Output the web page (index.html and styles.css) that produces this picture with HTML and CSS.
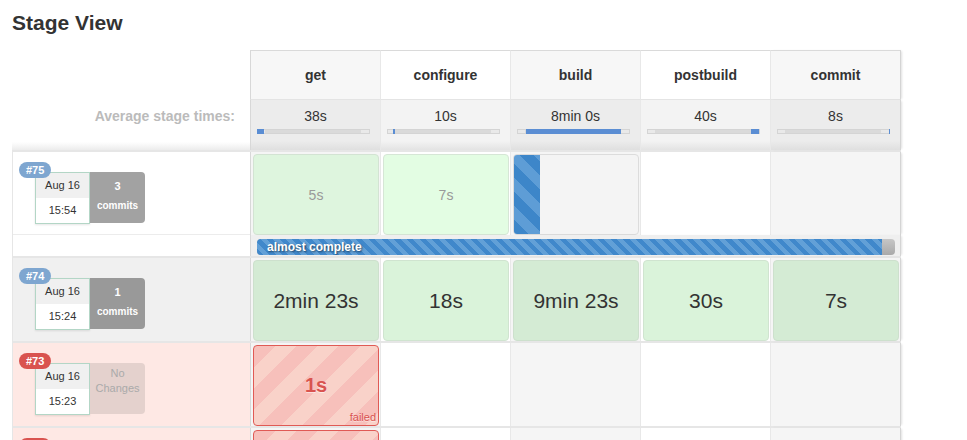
FILE: index.html
```html
<!DOCTYPE html>
<html>
<head>
<meta charset="utf-8">
<title>Stage View</title>
<link rel="stylesheet" href="styles.css">
</head>
<body>
<h1 class="title">Stage View</h1>
<div class="sv">
  <div class="sv-row names">
    <div class="left"></div>
    <div class="col odd first name">get</div>
    <div class="col even name">configure</div>
    <div class="col odd name">build</div>
    <div class="col even name">postbuild</div>
    <div class="col odd last name">commit</div>
  </div>
  <div class="sv-row avgs">
    <div class="left avg-label">Average stage times:</div>
    <div class="col odd first avg"><span>38s</span><div class="track"><div class="fill" style="margin-left:0;width:7px"></div></div></div>
    <div class="col even avg"><span>10s</span><div class="track"><div class="fill" style="margin-left:6px;width:2px"></div></div></div>
    <div class="col odd avg"><span>8min 0s</span><div class="track"><div class="fill" style="margin-left:9px;width:95px"></div></div></div>
    <div class="col even avg"><span>40s</span><div class="track"><div class="fill" style="margin-left:104px;width:8px"></div></div></div>
    <div class="col odd last avg"><span>8s</span><div class="track"><div class="fill" style="margin-left:112px;width:1px"></div></div></div>
  </div>

  <div class="sv-row body running">
    <div class="left build-cell white">
      <div class="build">
        <span class="badge blue">#75</span>
        <div class="date"><div class="d">Aug 16</div><div class="t">15:54</div></div>
        <div class="changes"><b class="num">3</b><b>commits</b></div>
      </div>
    </div>
    <div class="col odd first cellwrap"><div class="stage done a">5s</div></div>
    <div class="col even cellwrap"><div class="stage done b">7s</div></div>
    <div class="col odd cellwrap"><div class="stage inprogress"><div class="stripes"></div></div></div>
    <div class="col even cellwrap"></div>
    <div class="col odd last cellwrap"></div>
    <div class="prog">
      <div class="pbar"><div class="pfill" style="width:98%"><span>almost complete</span></div></div>
    </div>
  </div>

  <div class="sv-row body">
    <div class="left build-cell grey">
      <div class="build">
        <span class="badge blue">#74</span>
        <div class="date"><div class="d">Aug 16</div><div class="t">15:24</div></div>
        <div class="changes dark"><b class="num">1</b><b>commits</b></div>
      </div>
    </div>
    <div class="col odd first cellwrap"><div class="stage ok a">2min 23s</div></div>
    <div class="col even cellwrap"><div class="stage ok b">18s</div></div>
    <div class="col odd cellwrap"><div class="stage ok a">9min 23s</div></div>
    <div class="col even cellwrap"><div class="stage ok b">30s</div></div>
    <div class="col odd last cellwrap"><div class="stage ok a">7s</div></div>
  </div>

  <div class="sv-row body">
    <div class="left build-cell pink">
      <div class="build">
        <span class="badge red">#73</span>
        <div class="date"><div class="d">Aug 16</div><div class="t">15:23</div></div>
        <div class="changes none">No<br>Changes</div>
      </div>
    </div>
    <div class="col odd first cellwrap"><div class="stage failed">1s<span class="flabel">failed</span></div></div>
    <div class="col even cellwrap"></div>
    <div class="col odd cellwrap"></div>
    <div class="col even cellwrap"></div>
    <div class="col odd last cellwrap"></div>
  </div>

  <div class="sv-row body">
    <div class="left build-cell pink">
      <div class="build">
        <span class="badge red">#72</span>
        <div class="date"><div class="d">Aug 16</div><div class="t">15:20</div></div>
        <div class="changes none">No<br>Changes</div>
      </div>
    </div>
    <div class="col odd first cellwrap"><div class="stage failed">1s<span class="flabel">failed</span></div></div>
    <div class="col even cellwrap"></div>
    <div class="col odd cellwrap"></div>
    <div class="col even cellwrap"></div>
    <div class="col odd last cellwrap"></div>
  </div>
</div>
</body>
</html>
```

FILE: styles.css
```css
html, body {
  margin: 0;
  padding: 0;
  background: #fff;
}
body {
  font-family: "Liberation Sans", Arial, sans-serif;
  color: #333;
}
.title {
  margin: 11px 0 15px 12px;
  font-size: 21px;
  line-height: 24px;
  font-weight: bold;
  color: #333;
}
.sv {
  margin-left: 12px;
  width: 889px;
}
.sv-row {
  display: grid;
  grid-template-columns: 238px repeat(4, 130px) 131px;
}
.col {
  border-left: 1px solid #e8e8e8;
}
.col.first {
  border-left-color: #d8d8d8;
}
.col.last {
  border-right: 1px solid #d4d4d4;
  box-shadow: 2px 0 2px -1px rgba(0, 0, 0, 0.12);
}

/* header names */
.name {
  height: 48px;
  display: flex;
  align-items: center;
  justify-content: center;
  font-size: 14px;
  font-weight: bold;
  color: #333;
  border-top: 1px solid #dadada;
  border-bottom: 1px solid #e4e4e4;
}
.name.odd { background: #f7f7f7; }
.name.even { background: #fff; }

/* averages */
.avg {
  height: 50px;
  box-sizing: border-box;
  padding-top: 8px;
  text-align: center;
  font-size: 14px;
  line-height: 17px;
  color: #333;
}
.avg.odd { background: linear-gradient(#ececec 82%, #dfdfdf); }
.avg.even { background: linear-gradient(#f3f3f3 82%, #e3e3e3); }
.avg-label {
  box-sizing: border-box;
  padding: 8px 15px 0 0;
  text-align: right;
  font-size: 14px;
  line-height: 17px;
  font-weight: bold;
  color: #bbb;
  background: linear-gradient(#fff 84%, #ececec);
}
.track {
  display: flex;
  margin: 4px 10px 0 6px;
  height: 5px;
  background: linear-gradient(to right, #e9e9e9 8px, #dadada 8px, #dadada calc(100% - 9px), #e9e9e9 calc(100% - 9px));
  box-shadow: inset 0 0 0 1px #d4d4d4;
}
.fill {
  height: 100%;
  background: #5a8dd3;
}

/* body rows */
.body {
  border-top: 2px solid #e6e6e6;
  grid-template-rows: 83px;
}
.body.running {
  grid-template-rows: 83px 21px;
}
.build-cell {
  border-left: 1px solid #e6e6e6;
}
.running .build-cell {
  grid-row: 1 / 3;
  background: linear-gradient(#fff 82px, #ececec 82px, #ececec 83px, #fff 83px);
}
.build-cell.grey { background: #f0f0f0; }
.build-cell.pink { background: #fee8e4; }
.cellwrap {
  padding: 2px 1px 0 2px;
}
.cellwrap.odd { background: #f5f5f5; }
.cellwrap.even { background: #fff; }

.build {
  position: relative;
  display: flex;
  width: max-content;
  margin: 20px 0 0 22px;
}
.badge {
  position: absolute;
  left: -16px;
  top: -10px;
  height: 16px;
  line-height: 16px;
  padding: 0 7px;
  border-radius: 8px;
  font-size: 11px;
  font-weight: bold;
  color: #fff;
}
.badge.blue { background: #7ea6d0; }
.badge.red { background: #d9534f; }
.date {
  width: 55px;
  height: 52px;
  box-sizing: border-box;
  border: 1px solid #b3d6c6;
  font-size: 11px;
  text-align: center;
  color: #333;
  box-shadow: 0 1px 2px rgba(0, 0, 0, 0.1);
}
.date .d {
  height: 25px;
  line-height: 25px;
  background: #f0f0f0;
}
.date .t {
  height: 25px;
  line-height: 25px;
  background: #fff;
}
.changes {
  width: 55px;
  height: 51px;
  box-sizing: border-box;
  padding-top: 5px;
  border-radius: 0 4px 4px 0;
  background: #a2a2a2;
  color: #fff;
  font-size: 10px;
  line-height: 19px;
  text-align: center;
  display: flex;
  flex-direction: column;
}
.changes .num { font-size: 11px; }
.changes.dark { background: #999; }
.changes.none {
  display: block;
  padding-top: 3px;
  background: #e4d1cd;
  color: #aaa;
  font-size: 11px;
  line-height: 15px;
}

.stage {
  height: 81px;
  box-sizing: border-box;
  border-radius: 4px;
  border: 1px solid #d2e2d2;
  display: flex;
  align-items: center;
  justify-content: center;
}
.stage.done {
  font-size: 14px;
  color: #999;
}
.stage.done.a { background: #def5de; border-color: #d3e3d3; }
.stage.done.b { background: #e3fde3; border-color: #d6e6d6; }
.stage.ok {
  font-size: 21px;
  color: #333;
}
.stage.ok.a { background: #d4ebd4; border-color: #cde0cd; }
.stage.ok.b { background: #daf3da; border-color: #d0e4d0; }
.stage.inprogress {
  justify-content: flex-start;
  align-items: stretch;
  background: #f4f4f4;
  border-color: #dcdcdc;
  overflow: hidden;
}
.stripes {
  width: 26px;
  background: repeating-linear-gradient(45deg, #3d86c9 0 10px, #5e9dd6 10px 20px);
}
.stage.failed {
  position: relative;
  border-color: #e05a55;
  background: repeating-linear-gradient(135deg, #f7c0bb 0 15px, #f9d2c9 15px 30px);
  color: #d9534f;
  font-weight: bold;
  font-size: 20px;
  text-shadow: 0 1px 0 rgba(255, 255, 255, 0.5);
}
.flabel {
  position: absolute;
  right: 2px;
  bottom: 1px;
  font-size: 11px;
  font-weight: normal;
  line-height: 13px;
}

/* progress */
.prog {
  grid-column: 2 / 7;
  box-sizing: border-box;
  padding: 4px 5px 0 6px;
  background: #efefef;
  border-left: 1px solid #d8d8d8;
  border-right: 1px solid #d4d4d4;
  box-shadow: 2px 0 2px -1px rgba(0, 0, 0, 0.12);
}
.pbar {
  display: flex;
  height: 16px;
  border-radius: 4px;
  background: linear-gradient(#c6c6c6, #a9a9a9);
  overflow: hidden;
}
.pfill {
  height: 100%;
  background: repeating-linear-gradient(45deg, #4088cb 0 4.5px, #62a0d7 4.5px 9px);
  display: flex;
  align-items: center;
}
.pfill span {
  padding-left: 10px;
  font-size: 12px;
  font-weight: bold;
  color: #fff;
  text-shadow: 1px 1px 2px rgba(0, 0, 0, 0.55);
  white-space: nowrap;
}
```
